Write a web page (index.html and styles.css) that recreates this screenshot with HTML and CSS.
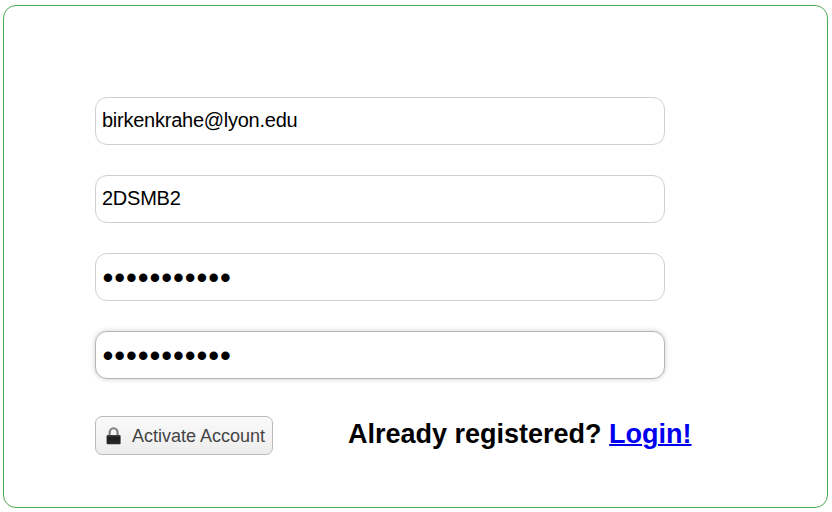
FILE: index.html
```html
<!DOCTYPE html>
<html lang="en">
<head>
<meta charset="utf-8">
<title>Activate Account</title>
<link rel="stylesheet" href="styles.css">
</head>
<body>
<form class="panel">
<input class="field" type="text" value="birkenkrahe@lyon.edu">
<input class="field" type="text" value="2DSMB2">
<input class="field field-secret" type="password" value="abcdefghijk">
<input class="field field-secret field-active" type="password" value="abcdefghijk">
<div class="actions">
<button class="activate" type="button">
<svg class="lock" viewBox="0 0 16 20" aria-hidden="true">
<defs><linearGradient id="metal" x1="0" y1="0" x2="0" y2="1"><stop offset="0" stop-color="#444"/><stop offset=".3" stop-color="#1c1c1c"/><stop offset="1" stop-color="#2c2c2c"/></linearGradient></defs>
<path d="M3.6 10.5V7.5C3.6 .5 11.6 .5 11.6 7.5V10.5" fill="none" stroke="#808080" stroke-width="2.2"/>
<rect x=".6" y="9" width="14" height="9.2" rx="1" fill="url(#metal)"/>
</svg>
<span>Activate Account</span>
</button>
<p class="login">Already registered? <a href="#">Login!</a></p>
</div>
</form>
</body>
</html>
```
FILE: styles.css
```css
* { box-sizing: border-box; }
body {
  margin: 0;
  padding: 5px 4px 4px 3px;
  height: 512px;
  background: #fff;
  color: #000;
  font-family: "Liberation Sans", Arial, sans-serif;
}
.panel {
  height: 503px;
  padding: 91px 91px 0;
  border: 1px solid #4fa855;
  border-radius: 13px;
}
.field {
  display: block;
  width: 570px;
  height: 48px;
  margin: 0 0 30px;
  padding: 0 6px 2px;
  border: 1px solid #d0d0d0;
  border-radius: 12px;
  outline: none;
  background: #fff;
  color: #000;
  font: 20px "Liberation Sans", Arial, sans-serif;
  letter-spacing: -0.25px;
}
.field-secret {
  padding: 1px 6.6px 0;
  font-size: 31px;
  letter-spacing: 0.9px;
}
.field-active {
  border-color: #b5b5b5;
  box-shadow: 0 0 5px #ccc;
}
.actions {
  display: flex;
  align-items: flex-start;
  gap: 75px;
  margin-top: 37px;
}
.activate {
  display: flex;
  align-items: center;
  gap: 10px;
  width: 178px;
  height: 39px;
  padding: 1px 0 0 10px;
  border: 1px solid #bbb;
  border-radius: 7px;
  background: linear-gradient(#fafafa, #ededed);
  color: #444;
  font: 18px "Liberation Sans", Arial, sans-serif;
  white-space: nowrap;
}
.lock { width: 16px; height: 20px; flex: none; }
.login {
  margin: 1px 0 0;
  font-size: 27px;
  font-weight: bold;
  line-height: 34px;
  white-space: nowrap;
}
.login a { color: #00e; text-decoration-thickness: 2px; }
```
